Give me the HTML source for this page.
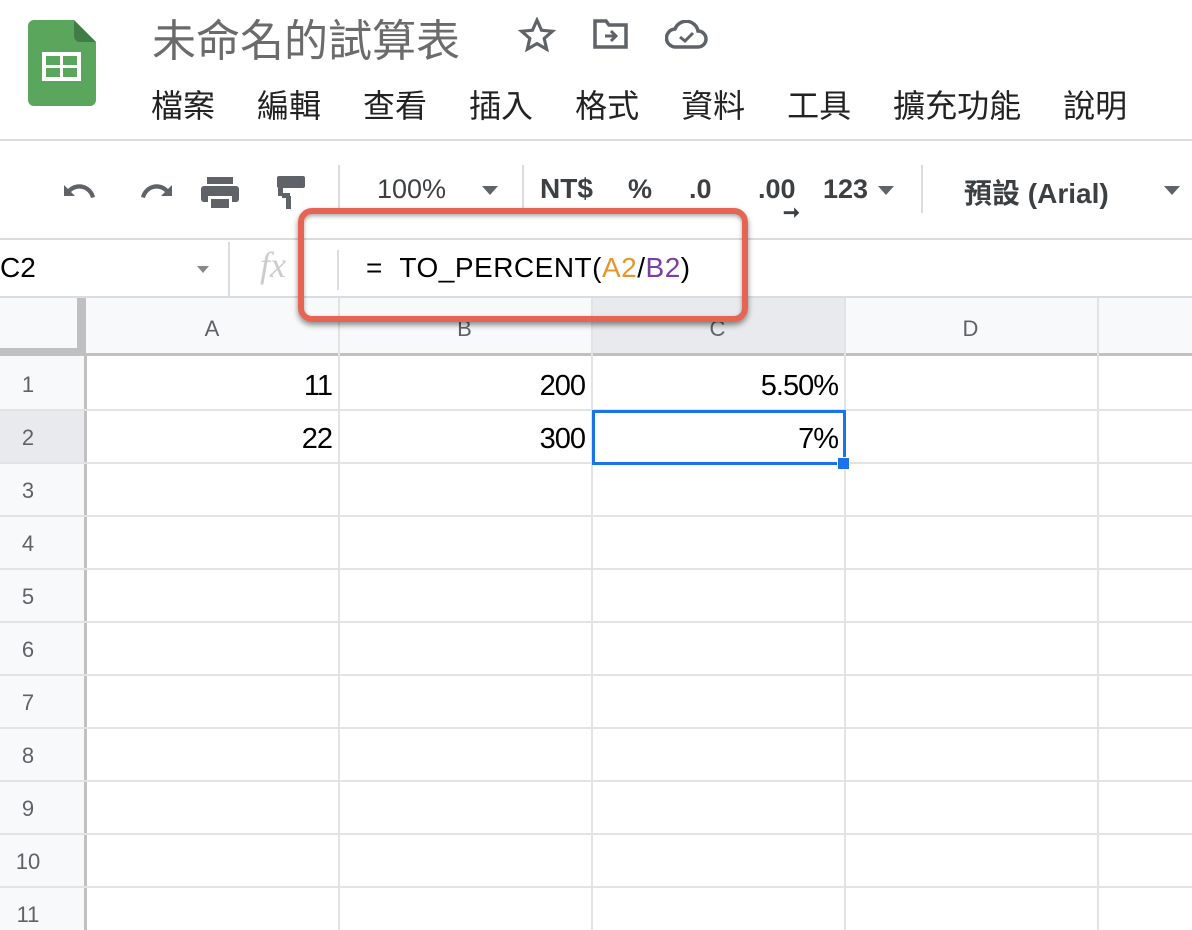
<!DOCTYPE html>
<html><head><meta charset="utf-8"><style>
*{margin:0;padding:0;box-sizing:border-box}
body{width:1192px;height:930px;overflow:hidden;background:#fff;font-family:"Liberation Sans","Noto Sans CJK TC",sans-serif;position:relative}
.a{position:absolute}
.menu span{margin-right:42px}
.cell{position:absolute;font-size:29px;color:#000;text-align:right;letter-spacing:-1px}
.rn{position:absolute;left:0;width:56px;text-align:center;font-size:22px;color:#5f6368}
.ch{position:absolute;top:298px;height:58px;line-height:62px;text-align:center;font-size:22px;color:#5f6368}
</style></head><body>
<svg class="a" style="left:28px;top:20px" width="68" height="86" viewBox="0 0 68 86">
<path d="M6 0H46L68 22V80a6 6 0 0 1-6 6H6a6 6 0 0 1-6-6V6a6 6 0 0 1 6-6z" fill="#5aa65c"/>
<path d="M46 0L68 22H52a6 6 0 0 1-6-6z" fill="#3f7d44"/>
<rect x="14" y="32" width="39" height="29" fill="#fff"/>
<rect x="18" y="36" width="14" height="9" fill="#5aa65c"/><rect x="35" y="36" width="14" height="9" fill="#5aa65c"/>
<rect x="18" y="48" width="14" height="9" fill="#5aa65c"/><rect x="35" y="48" width="14" height="9" fill="#5aa65c"/>
</svg>
<div class="a" style="left:152px;top:9px;font-size:44px;color:#6b6b6b;font-family:'Noto Sans CJK TC',sans-serif;line-height:56px">未命名的試算表</div>
<svg class="a" style="left:518px;top:17px" width="38" height="36" viewBox="0 0 24 23"><path d="M12 2l2.9 6.5 7 .6-5.3 4.6 1.6 6.9L12 17l-6.2 3.6 1.6-6.9L2.1 9.1l7-.6z" fill="none" stroke="#5f6368" stroke-width="2"/></svg>
<svg class="a" style="left:592px;top:18px" width="38" height="32" viewBox="0 0 38 32"><path d="M3 3h11l3 4h17v22H3z" fill="none" stroke="#5f6368" stroke-width="3.5"/><path d="M13 18h10M19 13l5 5-5 5" fill="none" stroke="#5f6368" stroke-width="3"/></svg>
<svg class="a" style="left:665px;top:20px" width="44" height="30" viewBox="0 0 44 30"><path d="M11 27a9 9 0 0 1-1-18 12 12 0 0 1 23 2 8 8 0 0 1 0 16z" fill="none" stroke="#5f6368" stroke-width="3.5"/><path d="M15 17l5 4 8-8" fill="none" stroke="#5f6368" stroke-width="3"/></svg>
<div class="a menu" style="left:151px;top:80px;font-size:32px;color:#222;font-family:'Noto Sans CJK TC',sans-serif;white-space:nowrap;line-height:48px"><span>檔案</span><span>編輯</span><span>查看</span><span>插入</span><span>格式</span><span>資料</span><span>工具</span><span>擴充功能</span><span>說明</span></div>
<div class="a" style="left:0;top:139px;width:1192px;height:2px;background:#dadce0"></div>
<svg class="a" style="left:60px;top:175px" width="250" height="34" viewBox="0 0 250 34">
<path d="M4 10v11h11l-4-4a12 12 0 0 1 20 6l4-1A16 16 0 0 0 8 14z" fill="#5f6368"/>
<path d="M112 10v11h-11l4-4a12 12 0 0 0-20 6l-4-1a16 16 0 0 1 27-8z" fill="#5f6368"/>
<rect x="147" y="2" width="26" height="7" fill="#5f6368"/><rect x="141" y="11" width="38" height="16" rx="3" fill="#5f6368"/><rect x="148" y="21" width="24" height="12" fill="#fff"/><rect x="151" y="24" width="18" height="9" fill="#5f6368"/>
<rect x="217" y="1" width="28" height="12" rx="2" fill="#5f6368"/><rect x="218" y="13" width="5" height="8" fill="#5f6368"/><rect x="222" y="18" width="8" height="5" fill="#5f6368"/><rect x="226" y="21" width="5" height="13" fill="#5f6368"/>
</svg>
<div class="a" style="left:338px;top:165px;width:2px;height:48px;background:#dadce0"></div>
<div class="a" style="left:377px;top:174px;font-size:27px;color:#3c4043">100%</div>
<div class="a" style="left:482px;top:186px;border:8px solid transparent;border-top:9px solid #5f6368;border-bottom:0"></div>
<div class="a" style="left:522px;top:165px;width:2px;height:48px;background:#dadce0"></div>
<div class="a" style="left:540px;top:173px;font-size:28px;font-weight:bold;color:#3c4043">NT$</div>
<div class="a" style="left:628px;top:174px;font-size:27px;color:#3c4043;font-weight:bold">%</div>
<div class="a" style="left:689px;top:174px;font-size:27px;color:#3c4043;font-weight:bold">.0</div>
<div class="a" style="left:758px;top:174px;font-size:27px;color:#3c4043;font-weight:bold">.00</div>
<div class="a" style="left:783px;top:200px;font-size:20px;color:#3c4043;font-weight:bold">➞</div>
<div class="a" style="left:823px;top:174px;font-size:27px;color:#3c4043;font-weight:bold">123</div>
<div class="a" style="left:878px;top:186px;border:8px solid transparent;border-top:9px solid #5f6368;border-bottom:0"></div>
<div class="a" style="left:921px;top:165px;width:2px;height:48px;background:#dadce0"></div>
<div class="a" style="left:964px;top:172px;font-size:28px;color:#3c4043;font-weight:bold">預設 (Arial)</div>
<div class="a" style="left:1164px;top:186px;border:8px solid transparent;border-top:9px solid #5f6368;border-bottom:0"></div>
<div class="a" style="left:0;top:238px;width:1192px;height:2px;background:#dadce0"></div>
<div class="a" style="left:0;top:252px;font-size:28px;color:#000">C2</div>
<div class="a" style="left:197px;top:266px;border:6px solid transparent;border-top:7px solid #888;border-bottom:0"></div>
<div class="a" style="left:228px;top:242px;width:2px;height:54px;background:#dadce0"></div>
<div class="a" style="left:260px;top:244px;font-size:36px;color:#ccc;font-style:italic;font-family:'Liberation Serif',serif">fx</div>
<div class="a" style="left:337px;top:250px;width:2px;height:40px;background:#dadce0"></div>
<div class="a" style="left:366px;top:252px;font-size:28px;color:#000;letter-spacing:0.5px">= &nbsp;TO_PERCENT(<span style="color:#e8952f">A2</span>/<span style="color:#7b3fa0">B2</span>)</div>
<div class="a" style="left:0;top:296px;width:1192px;height:2px;background:#dadce0"></div>
<div class="a" style="left:86px;top:298px;width:1106px;height:58px;background:#f8f9fa"></div>
<div class="a" style="left:592px;top:298px;width:252px;height:58px;background:#e8eaed"></div>
<div class="a" style="left:0;top:298px;width:86px;height:58px;background:#f8f9fa"></div>
<div class="a" style="left:77px;top:298px;width:9px;height:58px;background:#c0c0c0"></div>
<div class="a" style="left:0;top:348px;width:86px;height:8px;background:#c0c0c0"></div>
<div class="a" style="left:86px;top:353px;width:1106px;height:3px;background:#c0c0c0"></div>
<div class="ch" style="left:86px;width:252px">A</div>
<div class="ch" style="left:338px;width:253px">B</div>
<div class="ch" style="left:591px;width:253px">C</div>
<div class="ch" style="left:844px;width:253px">D</div>
<div class="a" style="left:0;top:356px;width:86px;height:574px;background:#f8f9fa"></div>
<div class="a" style="left:0;top:410px;width:86px;height:53px;background:#e8eaed"></div>
<div class="a" style="left:84px;top:356px;width:3px;height:574px;background:#c0c0c0"></div>
<div class="a" style="left:338px;top:298px;width:2px;height:632px;background:#e2e3e3"></div>
<div class="a" style="left:591px;top:298px;width:2px;height:632px;background:#e2e3e3"></div>
<div class="a" style="left:844px;top:298px;width:2px;height:632px;background:#e2e3e3"></div>
<div class="a" style="left:1097px;top:298px;width:2px;height:632px;background:#e2e3e3"></div>
<div class="a" style="left:0;top:409px;width:1192px;height:2px;background:#e2e3e3"></div>
<div class="a" style="left:0;top:462px;width:1192px;height:2px;background:#e2e3e3"></div>
<div class="a" style="left:0;top:515px;width:1192px;height:2px;background:#e2e3e3"></div>
<div class="a" style="left:0;top:568px;width:1192px;height:2px;background:#e2e3e3"></div>
<div class="a" style="left:0;top:621px;width:1192px;height:2px;background:#e2e3e3"></div>
<div class="a" style="left:0;top:674px;width:1192px;height:2px;background:#e2e3e3"></div>
<div class="a" style="left:0;top:727px;width:1192px;height:2px;background:#e2e3e3"></div>
<div class="a" style="left:0;top:780px;width:1192px;height:2px;background:#e2e3e3"></div>
<div class="a" style="left:0;top:833px;width:1192px;height:2px;background:#e2e3e3"></div>
<div class="a" style="left:0;top:886px;width:1192px;height:2px;background:#e2e3e3"></div>
<div class="rn" style="top:372px">1</div><div class="rn" style="top:425px">2</div>
<div class="rn" style="top:478px">3</div><div class="rn" style="top:531px">4</div>
<div class="rn" style="top:584px">5</div><div class="rn" style="top:637px">6</div>
<div class="rn" style="top:690px">7</div><div class="rn" style="top:743px">8</div>
<div class="rn" style="top:796px">9</div><div class="rn" style="top:849px">10</div>
<div class="rn" style="top:902px">11</div>
<div class="cell" style="left:86px;width:246px;top:370px">11</div>
<div class="cell" style="left:338px;width:247px;top:370px">200</div>
<div class="cell" style="left:591px;width:247px;top:370px">5.50%</div>
<div class="cell" style="left:86px;width:246px;top:423px">22</div>
<div class="cell" style="left:338px;width:247px;top:423px">300</div>
<div class="cell" style="left:591px;width:247px;top:423px">7%</div>
<div class="a" style="left:592px;top:410px;width:254px;height:55px;border:3px solid #1a73e8"></div>
<div class="a" style="left:837px;top:457px;width:13px;height:13px;background:#1a73e8;border:1px solid #fff"></div>
<div class="a" style="left:298px;top:208px;width:450px;height:114px;border:6px solid #e66454;border-radius:14px;box-shadow:0 3px 6px rgba(0,0,0,0.45),inset 0 2px 4px rgba(0,0,0,0.35)"></div>
</body></html>
